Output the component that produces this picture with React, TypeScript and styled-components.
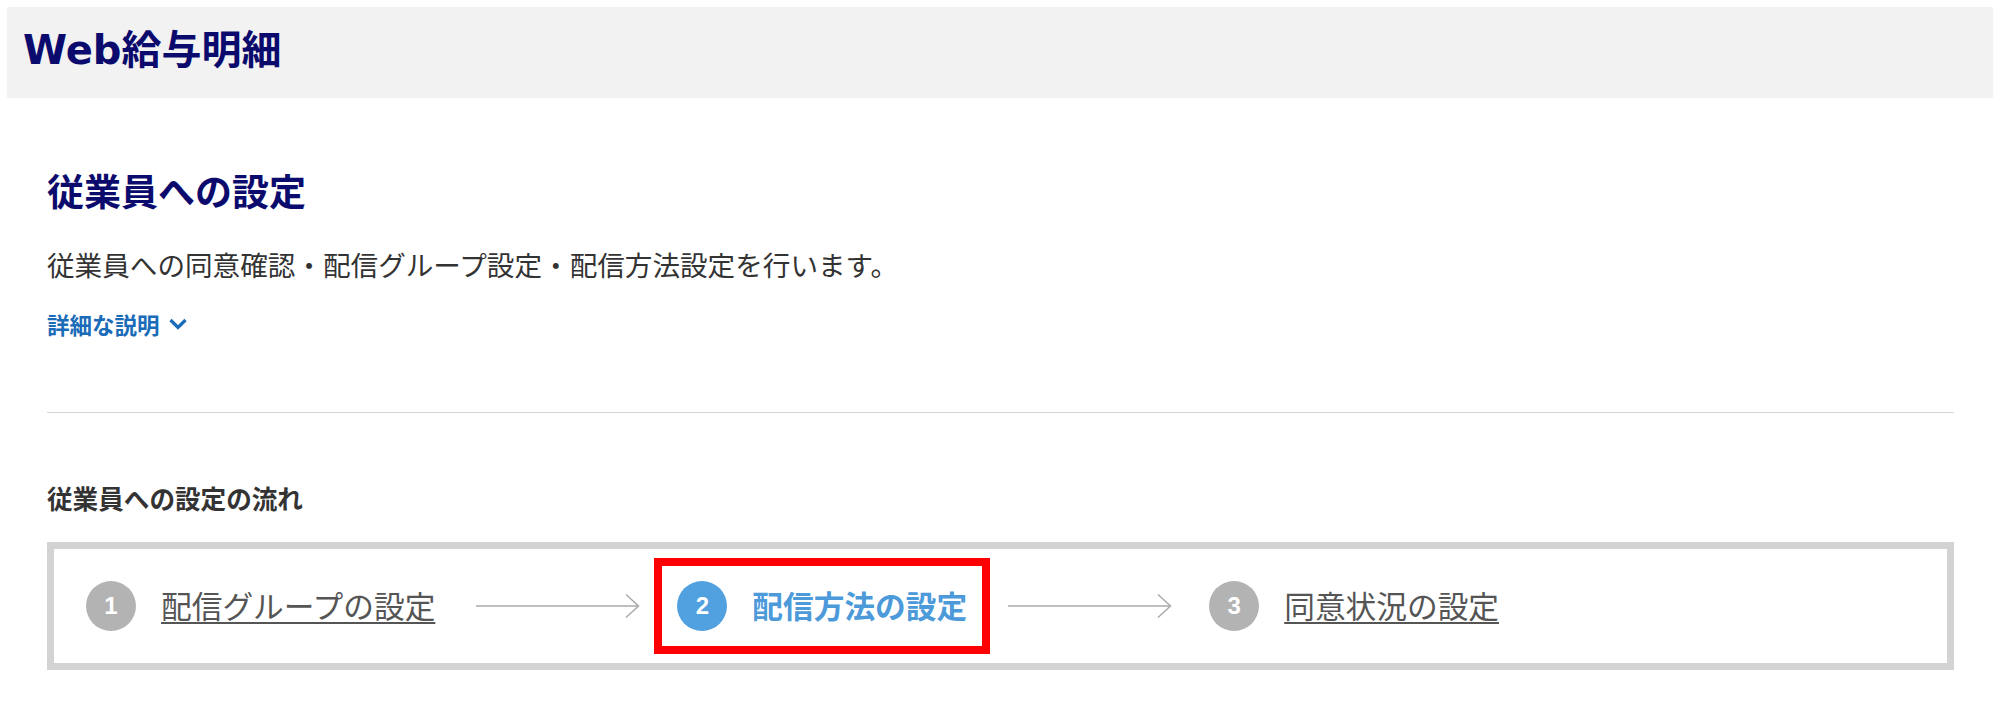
import React from "react"
import styled, { createGlobalStyle } from "styled-components"

const GlobalStyle = createGlobalStyle`
  body {
    background: #fff;
    font-family: "Noto Sans CJK JP", sans-serif;
    margin: 7px;
  }
`

const Header = styled.header`
  align-items: center;
  background-color: #f2f2f2;
  display: flex;
  height: 91px;
  padding: 0 16px 6px;
  box-sizing: border-box;
`

const AppTitle = styled.h1`
  color: #0b0b6e;
  font-family: "DejaVu Sans", "Noto Sans CJK JP", sans-serif;
  font-size: 40px;
  font-weight: bold;
  line-height: 1;
  margin: 0;
`

const Main = styled.main`
  display: flex;
  flex-direction: column;
  padding: 0 39px 0 40px;
`

const PageTitle = styled.h2`
  color: #0b0b6e;
  font-size: 37px;
  font-weight: bold;
  line-height: 1;
  margin: 74px 0 0;
`

const Lead = styled.p`
  color: #333;
  font-size: 27.6px;
  line-height: 1;
  margin: 42px 0 0;
`

const DetailToggle = styled.button`
  align-items: center;
  align-self: flex-start;
  background: none;
  border: none;
  color: #1a6bb8;
  cursor: pointer;
  display: flex;
  font-family: "Noto Sans CJK JP", sans-serif;
  font-size: 22.5px;
  font-weight: bold;
  gap: 8px;
  line-height: 1;
  margin: 34px 0 0;
  padding: 0;
`

const Divider = styled.hr`
  border: none;
  border-top: 1px solid #d7d7d7;
  margin: 77px 0 0;
  width: 100%;
`

const FlowTitle = styled.h3`
  color: #333;
  font-size: 25.6px;
  font-weight: bold;
  line-height: 1;
  margin: 72px 0 0;
`

const FlowBox = styled.ol`
  align-items: center;
  border: 7px solid #d3d3d3;
  display: flex;
  height: 128px;
  box-sizing: border-box;
  list-style: none;
  margin: 31px 0 0;
  padding: 0 0 0 32px;
`

const Step = styled.li<{ $active?: boolean }>`
  align-items: center;
  display: flex;
  gap: 25px;
  outline: ${({ $active }) => ($active ? "8px solid #ff0000" : "none")};
  outline-offset: 15px;
`

const StepNumber = styled.span<{ $active?: boolean }>`
  align-items: center;
  background-color: ${({ $active }) => ($active ? "#51a0e0" : "#b3b3b3")};
  border-radius: 50%;
  color: #fff;
  display: flex;
  flex: 0 0 50px;
  font-family: "Liberation Sans", Arial, sans-serif;
  font-size: 24px;
  font-weight: bold;
  height: 50px;
  justify-content: center;
  line-height: 1;
  width: 50px;
`

const StepLabel = styled.a<{ $active?: boolean }>`
  color: ${({ $active }) => ($active ? "#4c9ad9" : "#555")};
  font-size: 30.7px;
  font-weight: ${({ $active }) => ($active ? "bold" : "normal")};
  line-height: 1;
  text-decoration: ${({ $active }) => ($active ? "none" : "underline")};
  text-decoration-thickness: 2px;
  text-underline-offset: 4px;
`

const StepArrow = styled.li`
  display: flex;
  margin: 0 37px 0 41px;
`

const steps = [
  { label: "配信グループの設定" },
  { label: "配信方法の設定", active: true },
  { label: "同意状況の設定" },
]

const Arrow = () => (
  <StepArrow aria-hidden>
    <svg width="164" height="26" viewBox="0 0 164 26">
      <line x1="0" y1="13" x2="162" y2="13" stroke="#aaa" strokeWidth="1.5" />
      <polyline
        points="150,1.5 162.5,13 150,24.5"
        fill="none"
        stroke="#aaa"
        strokeWidth="1.5"
      />
    </svg>
  </StepArrow>
)

const App = () => {
  return (
    <>
      <GlobalStyle />
      <Header>
        <AppTitle>Web給与明細</AppTitle>
      </Header>
      <Main>
        <PageTitle>従業員への設定</PageTitle>
        <Lead>
          従業員への同意確認・配信グループ設定・配信方法設定を行います。
        </Lead>
        <DetailToggle type="button">
          詳細な説明
          <svg width="20" height="14" viewBox="0 0 20 14">
            <polyline
              points="2.5,3 10,10.5 17.5,3"
              fill="none"
              stroke="#1a6bb8"
              strokeWidth="3.2"
            />
          </svg>
        </DetailToggle>
        <Divider />
        <FlowTitle>従業員への設定の流れ</FlowTitle>
        <FlowBox>
          {steps.map((step, index) => (
            <React.Fragment key={step.label}>
              {index > 0 && <Arrow />}
              <Step $active={step.active}>
                <StepNumber $active={step.active}>{index + 1}</StepNumber>
                <StepLabel $active={step.active} href={step.active ? undefined : "#"}>
                  {step.label}
                </StepLabel>
              </Step>
            </React.Fragment>
          ))}
        </FlowBox>
      </Main>
    </>
  )
}

export default App
